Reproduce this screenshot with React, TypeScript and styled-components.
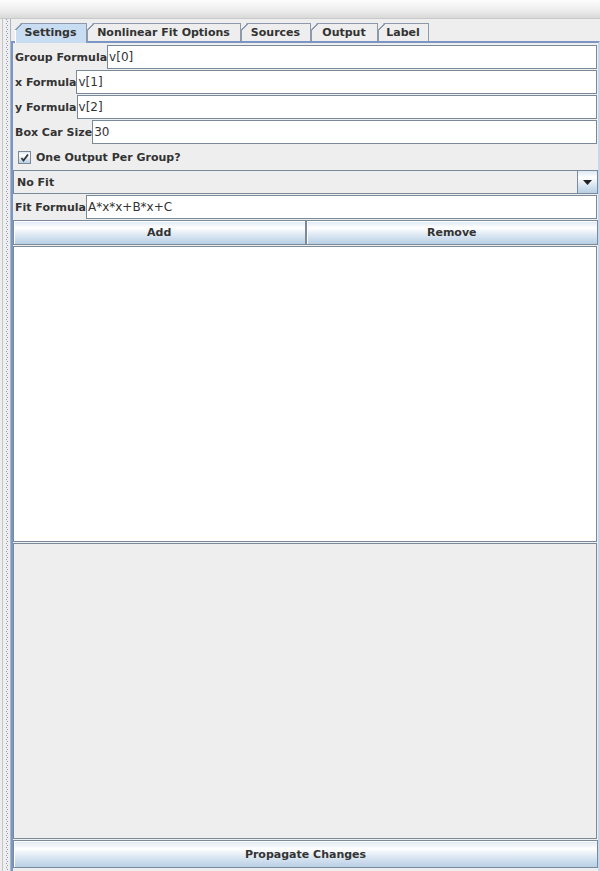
import React from "react";
import styled, { createGlobalStyle } from "styled-components";

const Global = createGlobalStyle`
  html, body, #root { margin: 0; padding: 0; height: 100%; }
  body {
    background: #eeeeee;
    font-family: "DejaVu Sans", Verdana, sans-serif;
    color: #333333;
    overflow: hidden;
  }
  * { box-sizing: border-box; }
`;

const oceanGradient = `linear-gradient(to bottom, #dde8f3 0%, #ffffff 30%, #dde8f3 60%, #b8cfe5 100%)`;

const Frame = styled.div`
  display: flex;
  flex-direction: column;
  height: 100%;
`;

const TitleBar = styled.div`
  flex: none;
  height: 19px;
  background: linear-gradient(to bottom, #fdfdfd 0%, #ececec 60%, #d9d9d9 100%);
  border-bottom: 1px solid #c9c9c9;
`;

const Main = styled.div`
  flex: 1;
  display: flex;
  min-height: 0;
`;

const Splitter = styled.div`
  flex: none;
  width: 11px;
  background:
    linear-gradient(#c4c4c4, #c4c4c4) 2px 0 / 1px 100% no-repeat,
    linear-gradient(#a9b7ca, #a9b7ca) 10px 0 / 1px 100% no-repeat,
    repeating-linear-gradient(to bottom, #8a9cb4 0 1px, transparent 1px 4px) 6px 0 / 1px 100% no-repeat,
    repeating-linear-gradient(to bottom, transparent 0 2px, #8a9cb4 2px 3px, transparent 3px 4px) 7px 0 / 1px 100% no-repeat;
`;

const Pane = styled.div`
  flex: 1;
  display: flex;
  flex-direction: column;
  min-width: 0;
`;

const TabStrip = styled.div`
  flex: none;
  height: 22px;
  display: flex;
  align-items: flex-end;
  padding-left: 4px;
`;

const Tab = styled.div<{ $w: number; $selected?: boolean }>`
  position: relative;
  width: ${(p) => p.$w}px;
  height: ${(p) => (p.$selected ? 20 : 18)}px;
  margin-bottom: ${(p) => (p.$selected ? -2 : 0)}px;
  z-index: ${(p) => (p.$selected ? 2 : 1)};
  background: ${(p) => (p.$selected ? "#c8ddf2" : "#eeeeee")};
  border-top: 1px solid #8c9aab;
  border-right: 1px solid #8c9aab;
  clip-path: polygon(6px 0, 100% 0, 100% 100%, 0 100%, 0 6px);
  display: flex;
  align-items: ${(p) => (p.$selected ? "flex-start" : "center")};
  padding-top: ${(p) => (p.$selected ? 2 : 0)}px;
  justify-content: center;
  font-size: 11px;
  font-weight: bold;
  color: #333333;
  white-space: nowrap;
  &::before {
    content: "";
    position: absolute;
    left: 0;
    top: -1px;
    width: 7px;
    height: 7px;
    background: linear-gradient(to bottom right, transparent 44%, #8c9aab 44%, #8c9aab 58%, transparent 58%);
  }
  &::after {
    content: "";
    position: absolute;
    left: 0;
    top: 6px;
    bottom: 0;
    width: 1px;
    background: ${(p) => (p.$selected ? "#ffffff" : "#8c9aab")};
  }
`;

const Content = styled.div`
  flex: 1;
  min-height: 0;
  display: flex;
  flex-direction: column;
  gap: 1px;
  border-top: 2px solid #7b95c4;
  border-left: 2px solid #7b95c4;
  border-right: 2px solid #c4d7ec;
  padding: 2px 0 3px 0;
`;

const Row = styled.div`
  flex: none;
  height: 24px;
  display: flex;
  align-items: stretch;
`;

const Label = styled.span`
  display: flex;
  align-items: center;
  padding-left: 2px;
  font-size: 11px;
  font-weight: bold;
  color: #333333;
  white-space: nowrap;
`;

const Field = styled.div`
  flex: 1;
  margin-right: 1px;
  background: #ffffff;
  border: 1px solid #7a8a99;
  display: flex;
  align-items: center;
  padding-left: 1px;
  font-size: 12px;
  color: #333333;
  white-space: nowrap;
`;

const CheckRow = styled.div`
  flex: none;
  height: 24px;
  display: flex;
  align-items: center;
  gap: 5px;
  padding-left: 5px;
  font-size: 11px;
  font-weight: bold;
  color: #333333;
`;

const CheckBox = styled.div`
  width: 13px;
  height: 13px;
  border: 1px solid #7a8a99;
  background: ${oceanGradient};
  display: flex;
  align-items: center;
  justify-content: center;
`;

const Combo = styled.div`
  flex: none;
  height: 24px;
  display: flex;
  border: 1px solid #7a8a99;
  background: #eeeeee;
`;

const ComboText = styled.span`
  flex: 1;
  display: flex;
  align-items: center;
  padding-left: 3px;
  font-size: 11px;
  font-weight: bold;
  color: #333333;
`;

const ArrowButton = styled.div`
  width: 20px;
  border-left: 1px solid #7a8a99;
  background: ${oceanGradient};
  display: flex;
  align-items: center;
  justify-content: center;
`;

const ButtonRow = styled.div`
  flex: none;
  height: 25px;
  display: grid;
  grid-template-columns: 1fr 1fr;
`;

const Button = styled.div<{ $h?: number }>`
  flex: none;
  height: ${(p) => (p.$h ? `${p.$h}px` : "auto")};
  border: 1px solid #7a8a99;
  box-shadow: inset 1px 1px 0 #ffffff;
  background: ${oceanGradient};
  display: flex;
  align-items: center;
  justify-content: center;
  font-size: 11px;
  font-weight: bold;
  color: #333333;
`;

const ListBox = styled.div`
  flex: 1;
  min-height: 0;
  margin-right: 1px;
  background: #ffffff;
  border: 1px solid #7a8a99;
`;

const GrayPanel = styled.div`
  flex: 1;
  min-height: 0;
  margin-right: 1px;
  background: #eeeeee;
  border: 1px solid #7a8a99;
`;

const tabs: { name: string; w: number }[] = [
  { name: "Settings", w: 72 },
  { name: "Nonlinear Fit Options", w: 154 },
  { name: "Sources", w: 70 },
  { name: "Output", w: 67 },
  { name: "Label", w: 51 },
];

const fields: { label: string; value: string }[] = [
  { label: "Group Formula", value: "v[0]" },
  { label: "x Formula", value: "v[1]" },
  { label: "y Formula", value: "v[2]" },
  { label: "Box Car Size", value: "30" },
];

export default function App() {
  return (
    <Frame>
      <Global />
      <TitleBar />
      <Main>
        <Splitter />
        <Pane>
          <TabStrip>
            {tabs.map((t, i) => (
              <Tab key={t.name} $w={t.w} $selected={i === 0}>
                {t.name}
              </Tab>
            ))}
          </TabStrip>
          <Content>
            {fields.map((f) => (
              <Row key={f.label}>
                <Label>{f.label}</Label>
                <Field>{f.value}</Field>
              </Row>
            ))}
            <CheckRow>
              <CheckBox>
                <svg width="9" height="9" viewBox="0 0 9 9">
                  <path d="M1.5 5 L3.5 7.5 L8 1.5" fill="none" stroke="#333" strokeWidth="1.8" />
                </svg>
              </CheckBox>
              One Output Per Group?
            </CheckRow>
            <Combo>
              <ComboText>No Fit</ComboText>
              <ArrowButton>
                <svg width="9" height="5" viewBox="0 0 9 5">
                  <path d="M0 0 H9 L4.5 5 Z" fill="#222" />
                </svg>
              </ArrowButton>
            </Combo>
            <Row>
              <Label>Fit Formula</Label>
              <Field>A*x*x+B*x+C</Field>
            </Row>
            <ButtonRow>
              <Button>Add</Button>
              <Button>Remove</Button>
            </ButtonRow>
            <ListBox />
            <GrayPanel />
            <Button $h={28}>Propagate Changes</Button>
          </Content>
        </Pane>
      </Main>
    </Frame>
  );
}
